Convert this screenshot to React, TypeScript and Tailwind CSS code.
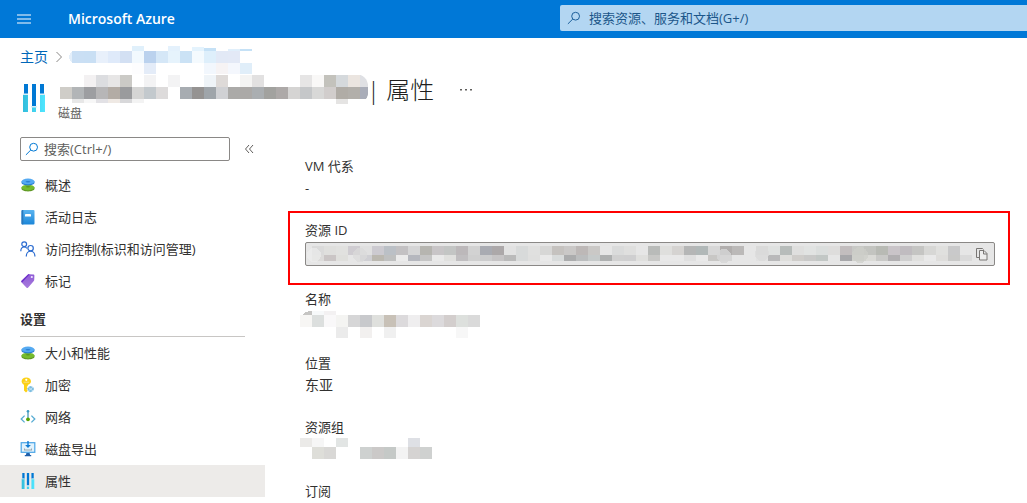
import React from 'react';

type Cell = [x: number, y: number, width: number, height: number, color: string];

// Turns a row of 12px wide tiles into cells; a dash leaves a gap.
const row = (x: number, y: number, height: number, colors: string): Cell[] =>
  colors
    .split(' ')
    .map((color, i): Cell => [x + i * 12, y, 12, height, color])
    .filter((cell) => cell[4] !== '-');

const BREADCRUMB_CELLS: Cell[] = [
  [63, 0, 12, 5, 'e0f0fb'],
  [99, 0, 12, 5, 'e4f1fc'],
  [123, 1, 12, 4, 'e4f3fd'],
  [135, 2, 12, 3, 'c5e1f6'],
  [159, 3, 12, 2, 'e0effb'],
  [171, 3, 12, 2, 'c5e1f6'],
  ...row(3, 5, 12, 'cadff4 c9dff4 e8f0fb dfeafa d3e0f3 f2f9fe bbd2ee d5e7f7 e6f3fc cbe2f5 f4fafe deeffb e2e9f6 e3e9f6'),
  ...row(63, 17, 11, 'fdfdfe e4ecf8 - - - - f2f7fd f6f3f4 f4f7fd e0eef9'),
];

const TITLE_CELLS: Cell[] = [
  ...row(24, 1, 12, 'f3f1f2 dcdde0 e7e6e6 cbcac6 - f3f3f4 - f3f3f4 - - eff4f8 dedad8 - f4f4f3 e2e1e1 - - - e6e5e5 f9f8f7 c3c2bc d5d9dc ebe5e0 dfe0e4'),
  ...row(0, 13, 12, 'cfcdc8 b2b5b7 9d9ea1 b7b6b7 b3aca5 9a9b9d d5d5d4 c3c9cd dddbdb - a7acb1 959392 9fa5aa d0d1d4 abaaa8 aba9a7 aaaeb1 a2a29f ada9a8 d5d4d3 c5c7c9 d8d8d7 d1cdcc b0aca6 b2afaa 9a9ea1'),
  ...row(12, 25, 4, 'e7e7e7 f7f7f7 e2e1e5 efe9e4 d8d8da f3f3f3'),
  [276, 25, 12, 5, 'e5e4e3'],
];

const RESOURCE_ID_CELLS: Cell[] = [
  ...row(6, 3, 9, 'dadada dfdfdd e1e1df cfccd1 e0e0e0 cccad0 bbc0c6 c3c1c3 d5d5d6 b6b5b0 c8c5c7 c3c5c4 bcb8ba d2d2d2 a9abb2 aca8a9 e2e2e2 d8dada e0e0df d7d7d6 c5c2bf cac8c7 bdb8b7 cac8c6 - dadbdb dfdfde - b9bbb9 dfdfdd d5d3d1 b5b6b6 b1b8b8 d7d7d7 b1aead bbb9b8 - dadad9 dfe1e0 b7bcba dfdfde e1e3e2 dbdedd dedddc c2bdbe c8c9c6 c3c4c0 b8bab4 c9c4c8 c0bcc0 c5c5c3 d7d7d5 e0e0de c9c9ca'),
  ...row(6, 12, 6, 'dcdbda cac5c5 dfdfdc - cfcfd3 bbb8b0 bfc0c0 ebebeb b5b7be c5c5c5 e9e9e9 e0e0de c0bec0 cfcfcf cccccd c6c4c5 bababa d8dada dfdfde e9e9e9 d8dbdb abacad bbbdbe c6caca aeb0b0 d0d0d0 cfcfd0 dfdfdd c8c8c6 e8e8e8 e8e8e8 dfdfdf e9e9e9 c8c7c5 d6d6d6 - - e1e1e1 b9b9ba dededb cfcdca c9c9c8 c2c7c5 - a7a7aa d0d1cc dadad6 c9c9c7 b1afb1 cfcfcf e0e0de e9e9e9 dedddb c9c9c8 dadada'),
];

const NAME_CELLS: Cell[] = [
  [12, 0, 12, 4, 'f7f9fa'],
  [24, 0, 12, 4, 'f3f1f2'],
  ...row(0, 4, 12, 'f7f6f4 dcdfde f9f8f9 f4f4f2 d6d6d7 c8c9cc dfe0dd c8c1b7 dcdadc efeeef dad5d2 dcdadc d3cecd dde0dd dadada'),
  ...row(36, 16, 11, 'ebebeb - f2f0ef - f0f0f0 - - - - - f7f7f7'),
];

const GROUP_CELLS: Cell[] = [
  ...row(0, 0, 9, 'ebeae8 f6f6f6 - e2e5e4 - - - - - dee0e5'),
  ...row(12, 9, 12, 'deded9 d9d8d6 - - ced1d0 cbc9c8 c5c9c7 f3f3f3 d5d3d2 cfd1d0'),
];

interface MosaicProps {
  cells: Cell[];
  width: number;
  height: number;
  className?: string;
  children?: React.ReactNode;
}

const Mosaic: React.FC<MosaicProps> = ({ cells, width, height, className, children }) => (
  <svg
    width={width}
    height={height}
    viewBox={`0 0 ${width} ${height}`}
    shapeRendering="crispEdges"
    className={className}
    aria-hidden="true"
  >
    {cells.map(([x, y, w, h, color], i) => (
      <rect key={i} x={x} y={y} width={w} height={h} fill={`#${color}`} />
    ))}
    {children}
  </svg>
);

const SearchIcon: React.FC<{ className?: string }> = ({ className }) => (
  <svg width="14" height="14" viewBox="0 0 14 14" fill="none" stroke="currentColor" strokeWidth="1" className={className} aria-hidden="true">
    <circle cx="8.6" cy="5.2" r="3.9" />
    <path d="M5.8 8L.9 12.9" />
  </svg>
);

const DiskIcon = () => (
  <svg width="16" height="16" viewBox="0 0 16 16" aria-hidden="true">
    <path d="M1.5 10.6v1.2c0 1.5 2.9 2.6 6.5 2.6s6.5-1.1 6.5-2.6v-1.2z" fill="#5e9624" />
    <ellipse cx="8" cy="10.6" rx="6.5" ry="2.8" fill="#76bc2d" />
    <ellipse cx="8" cy="9.8" rx="2.2" ry=".7" fill="#5e9624" />
    <path d="M1.5 4.4v1.4c0 1.5 2.9 2.6 6.5 2.6s6.500-1.100 6.500-2.600V4.400z" fill="#2b7fd0" />
    <ellipse cx="8" cy="4.4" rx="6.5" ry="2.8" fill="#55aaf2" />
    <ellipse cx="8" cy="4.7" rx="2.5" ry=".8" fill="#2b7fd0" />
  </svg>
);

const LogIcon = () => (
  <svg width="16" height="16" viewBox="0 0 16 16" aria-hidden="true">
    <defs>
      <linearGradient id="log" x2="0" y2="1">
        <stop stopColor="#5ab4f0" />
        <stop offset="1" stopColor="#1b86d8" />
      </linearGradient>
    </defs>
    <rect x="1.5" y="1" width="13" height="14.5" rx="1" fill="url(#log)" />
    <path d="M2.500 1h.8v14.500h-.8a1 1 0 0 1-1-1V2a1 1 0 0 1 1-1z" fill="#2a78bd" />
    <rect x="5" y="5" width="6" height="2.6" rx=".4" fill="#fff" />
  </svg>
);

const AccessIcon = () => (
  <svg width="16" height="16" viewBox="0 0 16 16" fill="none" stroke="#2a6bd0" strokeWidth="1.2" aria-hidden="true">
    <circle cx="4.2" cy="3.2" r="2.4" />
    <path d="M.8 10.2c0-2.600 1.400-4.200 3.400-4.200 1.200 0 2.200.5 2.800 1.400" />
    <circle cx="10.6" cy="7.2" r="2.7" />
    <path d="M6.300 15.400c0-3 1.800-5.200 4.300-5.200s4.300 2.200 4.300 5.200" />
  </svg>
);

const TagIcon = () => (
  <svg width="16" height="16" viewBox="0 0 16 16" aria-hidden="true">
    <defs>
      <linearGradient id="tag" x1="0" x2="0" y1="0" y2="1">
        <stop stopColor="#8f5bd6" />
        <stop offset="1" stopColor="#a77bdc" />
      </linearGradient>
    </defs>
    <path d="M9 1.200l4.300.2c.7 0 1.100.5 1.100 1.100l-.2 4.400c0 .4-.2.700-.4 1L8 14.800c-.4.4-1 .4-1.400 0L1.400 9.200c-.4-.4-.4-1 0-1.400L8 1.500c.3-.2.600-.3 1-.3z" fill="url(#tag)" />
    <path d="M1.200 8.300L8 1.600c.5-.4 1-.4 1.700-.3L2 9.500z" fill="#6a2bc9" />
    <circle cx="11.8" cy="4" r="1.1" fill="#f2e8ff" />
  </svg>
);

const KeyIcon = () => (
  <svg width="16" height="16" viewBox="0 0 16 16" aria-hidden="true">
    <path
      fillRule="evenodd"
      d="M6.300.4C3.700.4 1.600 2 1.600 4.300c0 1.600 1 2.800 2.400 3.500v5.700l2 1.900 1.800-1.700-1.200-1.200 1.200-1.200-1.200-1.200 1.200-1V7.900C9.700 7.400 11 6 11 4.300 11 2 8.900.4 6.300.4zm0 1.300a1.100 1.100 0 1 1 0 2.200 1.100 1.100 0 0 1 0-2.200z"
      fill="#fcd116"
    />
    <path d="M3.500 4.700h5.600v1H3.500z" fill="#f7e08a" />
    <path d="M10.400 8.900l2.700 1.200.9 2-1 2-2.600 1.200-2.200-1.200-.9-2 .9-2z" fill="#7dbde0" />
    <path d="M8.200 10.200l4.900 3.800M13 10.200L8.200 14" stroke="#d9f0fa" strokeWidth=".7" />
  </svg>
);

const NetworkIcon = () => (
  <svg width="16" height="16" viewBox="0 0 16 16" fill="none" aria-hidden="true">
    <path d="M4.600 6.600L1.200 10l3.400 3.400M11.400 6.600l3.400 3.400-3.400 3.400" stroke="#57acd3" strokeWidth="1.300" />
    <path d="M8 2v8" stroke="#3b8fb5" strokeWidth="1.200" />
    <circle cx="8" cy="2.200" r="1.300" fill="#3b9ac4" />
    <circle cx="8" cy="10.300" r="1.900" fill="#57a300" />
  </svg>
);

const ExportIcon = () => (
  <svg width="16" height="16" viewBox="0 0 16 16" aria-hidden="true">
    <rect x="1.200" y="1.700" width="13.600" height="9.600" fill="#e1f2fc" stroke="#4aa5e6" strokeWidth="1.200" />
    <path d="M7.300 0h1.400v4h2.200L8 7 5.100 4h2.200z" fill="#0f7bd4" />
    <path d="M4 7.600h1v.9h6v-.9h1v1.900H4z" fill="#9aa5ae" />
    <path d="M6.400 11.900h3.200l.5 2h1.100v1.300H4.800v-1.300h1.100z" fill="#1f5faa" />
  </svg>
);

const PropertiesIcon: React.FC<{ size: number }> = ({ size }) => (
  <svg width={size} height={size} viewBox="0 0 28 28" aria-hidden="true">
    <defs>
      <linearGradient id="bars" x2="1">
        <stop stopColor="#32bedd" />
        <stop offset="1" stopColor="#50e6ff" />
      </linearGradient>
    </defs>
    <path d="M3 10h5v18H3zM12 23h4v5h-4zM20 10h5v18h-5z" fill="url(#bars)" />
    <path d="M4 0h4v10H4zM12 0h4v22h-4zM20 0h4v10h-4z" fill="#0078d4" />
    <path d="M3 9.500h5V11H3zM11 22h6v1.500h-6zM20 9.500h5V11h-5z" fill="#d5eef8" />
  </svg>
);

interface NavItem {
  label: string;
  icon: React.ReactNode;
  active?: boolean;
}

const mainItems: NavItem[] = [
  { label: '概述', icon: <DiskIcon /> },
  { label: '活动日志', icon: <LogIcon /> },
  { label: '访问控制(标识和访问管理)', icon: <AccessIcon /> },
  { label: '标记', icon: <TagIcon /> },
];

const settingsItems: NavItem[] = [
  { label: '大小和性能', icon: <DiskIcon /> },
  { label: '加密', icon: <KeyIcon /> },
  { label: '网络', icon: <NetworkIcon /> },
  { label: '磁盘导出', icon: <ExportIcon /> },
  { label: '属性', icon: <PropertiesIcon size={16} />, active: true },
];

const NavList: React.FC<{ items: NavItem[] }> = ({ items }) => (
  <ul>
    {items.map((item) => (
      <li key={item.label}>
        <a
          href="#"
          aria-current={item.active ? 'page' : undefined}
          className={`flex h-8 items-center gap-[9px] pl-5 ${item.active ? 'bg-[#edebe9]' : 'hover:bg-[#f3f2f1]'}`}
        >
          {item.icon}
          <span>{item.label}</span>
        </a>
      </li>
    ))}
  </ul>
);

const TopBar = () => (
  <header className="flex h-[38px] items-center bg-[#0078d7]">
    <div className="flex w-[560px] shrink-0 items-center">
      <button type="button" aria-label="菜单" className="ml-4 flex size-4 items-center justify-center">
        <svg width="14" height="10" viewBox="0 0 14 10" fill="#80bbeb" shapeRendering="crispEdges" aria-hidden="true">
          <path d="M0 0h14v2H0zM0 4h14v2H0zM0 8h14v2H0z" />
        </svg>
      </button>
      <a href="#" className="ml-9 text-sm leading-5 font-semibold text-white">
        Microsoft Azure
      </a>
    </div>
    <label className="mb-[2px] flex h-[26px] flex-1 items-center gap-2 rounded-l-xs bg-[#b3d6f2] pl-[7px] text-[#1c5f9a]">
      <SearchIcon className="shrink-0" />
      <input
        type="search"
        aria-label="搜索资源、服务和文档"
        placeholder="搜索资源、服务和文档(G+/)"
        className="w-full bg-transparent outline-none placeholder:text-[#1c568a]"
      />
    </label>
  </header>
);

const PageHeader = () => (
  <div className="pt-2 pl-5">
    <nav className="flex h-7 items-start">
      <a href="#" className="mt-[1px] text-sm leading-5 text-[#0067b8]">
        主页
      </a>
      <svg width="21" height="22" viewBox="0 0 21 22" fill="none" stroke="#8a8886" className="shrink-0" aria-hidden="true">
        <path d="M8.500 6l5 5-5 5" />
      </svg>
      <Mosaic cells={BREADCRUMB_CELLS} width={183} height={28}>
        <path d="M3 5C1 7 0 9 0 11s1 4 3 6z" fill="#e4effa" />
      </Mosaic>
    </nav>
    <div className="flex items-start">
      <span className="mt-[10px] shrink-0">
        <PropertiesIcon size={28} />
      </span>
      <div className="ml-3">
        <div className="flex items-start">
          <Mosaic cells={TITLE_CELLS} width={308} height={30} className="rounded-r-xl">
            <path d="M300 13h8v12h-8z" fill="#a9adb9" />
          </Mosaic>
          <h1 className="-ml-px text-2xl leading-8 font-light text-[#201f1e]">| 属性</h1>
          <button type="button" aria-label="更多" className="ml-6 flex h-8 w-4 items-center justify-center">
            <svg width="12" height="2" viewBox="0 0 12 2" fill="#605e5c" aria-hidden="true">
              <path d="M0 0h2v1.500H0zM5 0h2v1.500H5zM10 0h2v1.500h-2z" />
            </svg>
          </button>
        </div>
        <p className="-ml-[2px] text-xs leading-4 text-[#605e5c]">磁盘</p>
      </div>
    </div>
  </div>
);

const Sidebar = () => (
  <aside className="w-[265px] shrink-0">
    <div className="mb-2 flex items-center pl-5">
      <label className="flex h-6 w-[210px] items-center gap-[5px] rounded-xs border border-[#8a8886] pl-1 text-[#0078d4]">
        <SearchIcon className="shrink-0" />
        <input
          type="search"
          aria-label="搜索"
          placeholder="搜索(Ctrl+/)"
          className="w-full bg-transparent text-[#323130] outline-none placeholder:text-[#605e5c]"
        />
      </label>
      <button type="button" aria-label="折叠" className="ml-[14px] text-[#605e5c]">
        <svg width="10" height="10" viewBox="0 0 10 10" fill="none" stroke="currentColor" aria-hidden="true">
          <path d="M5 1L1.500 5 5 9M9 1L5.500 5 9 9" />
        </svg>
      </button>
    </div>
    <NavList items={mainItems} />
    <h2 className="mr-5 ml-5 flex h-10 items-center border-b border-[#c8c6c4] pt-1 font-semibold">设置</h2>
    <NavList items={settingsItems} />
  </aside>
);

const Properties = () => (
  <main className="min-w-0 flex-1 pt-[19px] pr-[17px] pl-[23px]">
    <div className="pl-[17px]">
      <h3>VM 代系</h3>
      <p className="mt-[2px]">-</p>
    </div>

    <div className="mt-[13px] border-2 border-[#f00] pt-[7px] pr-[13px] pb-[17px] pl-[15px]">
      <label htmlFor="resource-id" className="block">
        资源 ID
      </label>
      <div className="relative mt-[2px] flex h-6 items-center overflow-hidden rounded-xs border border-[#8a8886] bg-[#e6e6e6]">
        <input id="resource-id" type="text" readOnly className="min-w-0 flex-1 bg-transparent px-2 outline-none" />
        <Mosaic cells={RESOURCE_ID_CELLS} width={666} height={22} className="pointer-events-none absolute top-0 left-0">
          <circle cx="8" cy="12" r="7" fill="#efefef" fillOpacity=".6" />
          <circle cx="54" cy="12" r="7" fill="#dadada" fillOpacity=".7" />
          <circle cx="418" cy="13" r="7" fill="#d6d6d6" fillOpacity=".8" />
          <circle cx="456" cy="11" r="7" fill="#dadada" fillOpacity=".7" />
          <circle cx="554" cy="12" r="8" fill="#cdcec9" fillOpacity=".7" />
        </Mosaic>
        <button type="button" aria-label="复制" className="relative mr-[6px] bg-[#e6e6e6] text-[#797775]">
          <svg width="12" height="14" viewBox="0 0 12 14" fill="none" stroke="currentColor" aria-hidden="true">
            <path d="M3.500 10.500h-3v-9h6l1 1" />
            <path d="M3.500 3.500h4.500l3 3v6.500h-7.500zM7.500 3.500v3.500H11" fill="#eee" />
          </svg>
        </button>
      </div>
    </div>

    <div className="mt-1 pl-[17px]">
      <h3>名称</h3>
      <Mosaic cells={NAME_CELLS} width={180} height={27} className="mt-[2px] -ml-[5px]">
        <path d="M2 4C5 1 8 0 12 0v4z" fill="#c6c5c3" />
      </Mosaic>
    </div>

    <div className="mt-[15px] pl-[17px]">
      <h3>位置</h3>
      <p className="mt-[2px] text-sm leading-5">东亚</p>
    </div>

    <div className="mt-[22px] pl-[17px]">
      <h3>资源组</h3>
      <Mosaic cells={GROUP_CELLS} width={132} height={21} className="mt-[1px] -ml-[5px]" />
    </div>

    <div className="mt-[22px] pl-[17px]">
      <h3>订阅</h3>
    </div>
  </main>
);

const App: React.FC = () => {
  return (
    <div className="bg-white font-['Open_Sans','Noto_Sans_CJK_SC',sans-serif] text-[13px] leading-5 text-[#323130]">
      <TopBar />
      <PageHeader />
      <div className="mt-[15px] flex">
        <Sidebar />
        <Properties />
      </div>
    </div>
  );
};

export default App;
